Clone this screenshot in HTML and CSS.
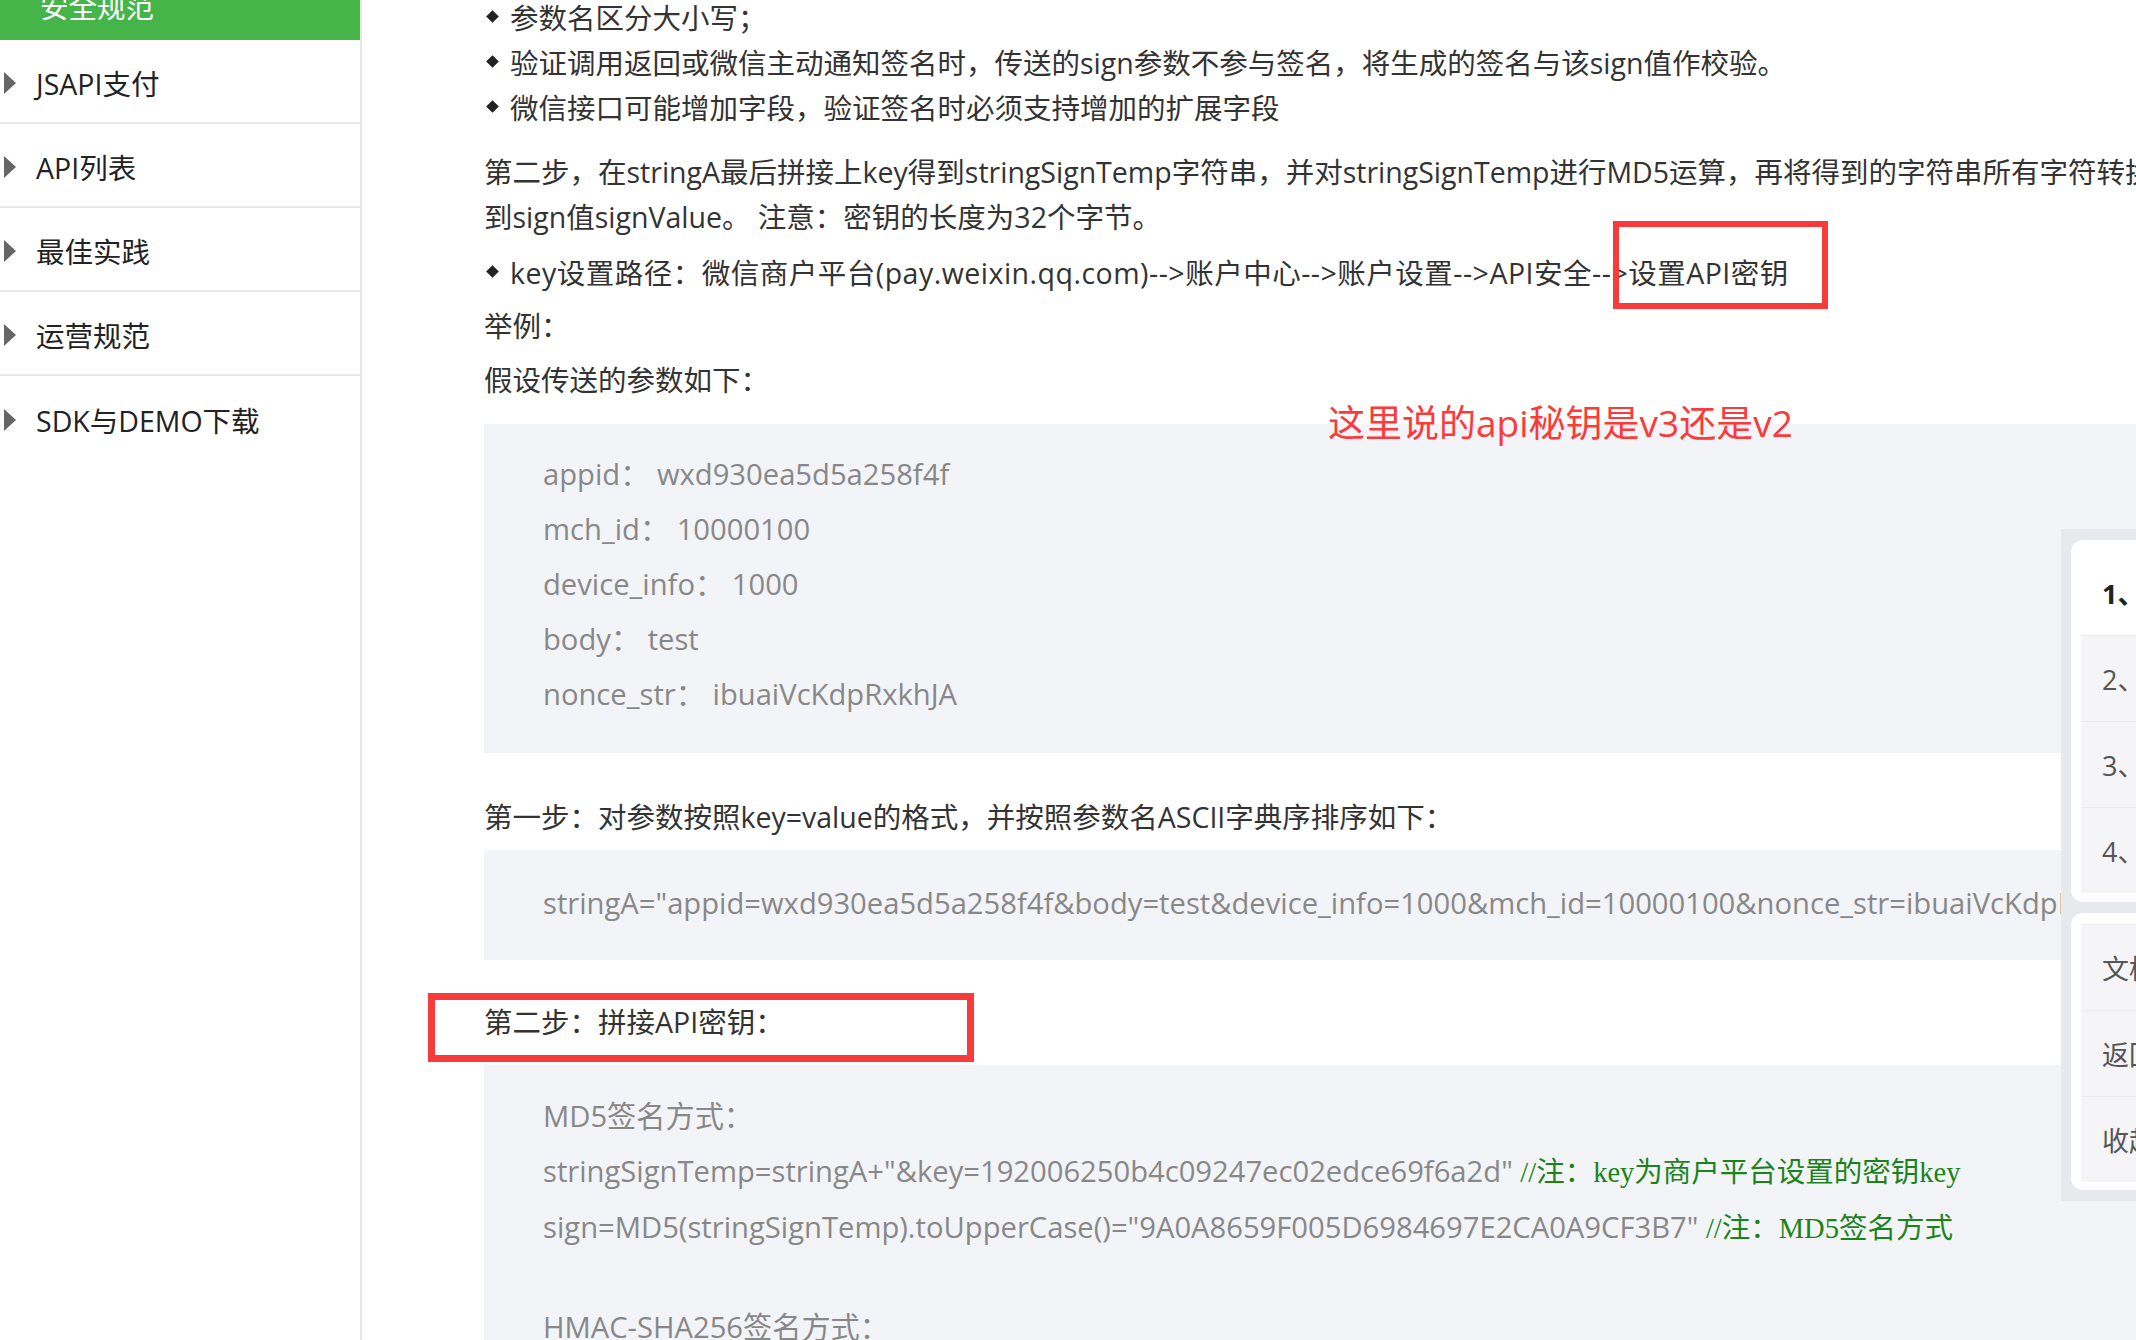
FILE: index.html
```html
<!DOCTYPE html>
<html lang="zh-CN">
<head>
<meta charset="utf-8">
<title>安全规范</title>
<link rel="stylesheet" href="styles.css">
</head>
<body>
<div class="page">
    <aside class="sidebar">
        <div class="nav-current">安全规范</div>
        <div class="nav-item">JSAPI支付</div>
        <div class="nav-item">API列表</div>
        <div class="nav-item">最佳实践</div>
        <div class="nav-item">运营规范</div>
        <div class="nav-item">SDK与DEMO下载</div>
    </aside>

    <main class="doc">
        <ul class="dots first">
            <li>参数名区分大小写；</li>
            <li>验证调用返回或微信主动通知签名时，传送的sign参数不参与签名，将生成的签名与该sign值作校验。</li>
            <li>微信接口可能增加字段，验证签名时必须支持增加的扩展字段</li>
        </ul>
        <p class="para-step">第二步，在stringA最后拼接上key得到stringSignTemp字符串，并对stringSignTemp进行MD5运算，再将得到的字符串所有字符转换为大写，得<br>到sign值signValue。 注意：密钥的长度为32个字节。</p>
        <ul class="dots key-path">
            <li>key设置路径：微信商户平台(pay.weixin.qq.com)--&gt;账户中心--&gt;账户设置--&gt;API安全--&gt;<span class="marked">设置API密钥</span></li>
        </ul>
        <p class="para-example">举例：</p>
        <p class="para-assume">假设传送的参数如下：</p>

        <div class="code code-params">
            <span class="note">这里说的api秘钥是v3还是v2</span>
            <div>appid：&nbsp;wxd930ea5d5a258f4f</div>
            <div>mch_id：&nbsp;10000100</div>
            <div>device_info：&nbsp;1000</div>
            <div>body：&nbsp;test</div>
            <div>nonce_str：&nbsp;ibuaiVcKdpRxkhJA</div>
        </div>

        <p class="para-first">第一步：对参数按照key=value的格式，并按照参数名ASCII字典序排序如下：</p>
        <div class="code code-string">
            <div>stringA="appid=wxd930ea5d5a258f4f&amp;body=test&amp;device_info=1000&amp;mch_id=10000100&amp;nonce_str=ibuaiVcKdpRxkhJA"</div>
        </div>

        <p class="para-second">第二步：拼接API密钥：</p>
        <div class="code code-sign">
            <div>MD5签名方式：</div>
            <div>stringSignTemp=stringA+"&amp;key=192006250b4c09247ec02edce69f6a2d" <span class="comment">//注：key为商户平台设置的密钥key</span></div>
            <div>sign=MD5(stringSignTemp).toUpperCase()="9A0A8659F005D6984697E2CA0A9CF3B7" <span class="comment">//注：MD5签名方式</span></div>
            <div class="code-gap">HMAC-SHA256签名方式：</div>
        </div>
    </main>
</div>

<div class="float-nav">
    <div class="float-card">
        <div class="float-item active">1、</div>
        <div class="float-item">2、</div>
        <div class="float-item">3、</div>
        <div class="float-item">4、</div>
    </div>
    <div class="float-card tools">
        <div class="float-item">文档目录</div>
        <div class="float-item">返回顶部</div>
        <div class="float-item">收起</div>
    </div>
</div>
</body>
</html>
```

FILE: styles.css
```css
body {
    margin: 0;
    font-family: "Open Sans", "Noto Sans CJK SC", sans-serif;
    background-color: #ffffff;
    color: #333333;
    overflow: hidden;
}

.page {
    display: flex;
    height: 1340px;
    overflow: hidden;
}

/* 左侧导航 */
.sidebar {
    width: 360px;
    flex-shrink: 0;
    border-right: 2px solid #e6e6ea;
    font-size: 28.5px;
    color: #222222;
}

.nav-current {
    height: 70px;
    margin-top: -30px;
    padding-left: 40px;
    display: flex;
    align-items: center;
    background-color: #45b449;
    color: #ffffff;
}

.nav-item {
    height: 84px;
    box-sizing: border-box;
    padding: 3px 0 0 4px;
    display: flex;
    align-items: center;
    gap: 20px;
    border-bottom: 2px solid #e8e8ec;
}

.nav-item:last-child {
    border-bottom: none;
}

.nav-item::before {
    content: "";
    border-left: 12px solid #666666;
    border-top: 11.5px solid transparent;
    border-bottom: 11.5px solid transparent;
}

/* 正文 */
.doc {
    width: 1700px;
    flex-shrink: 0;
    padding-left: 122px;
    font-size: 28.5px;
    line-height: 45px;
    white-space: nowrap;
    position: relative;
}

.doc p, .doc ul {
    margin: 0;
}

.dots {
    list-style: none;
    padding: 0;
}

.dots li {
    position: relative;
    padding-left: 26px;
}

.dots li::before {
    content: "";
    position: absolute;
    left: 4px;
    top: 16px;
    width: 9px;
    height: 9px;
    background-color: #222222;
    transform: rotate(45deg);
}

.dots.first { margin-top: -4px; }
.para-step { margin-top: 19px !important; }
.key-path { margin-top: 11px !important; letter-spacing: 0.5px; }
.para-example { margin-top: 8px !important; }
.para-assume { margin-top: 9px !important; }

.marked {
    display: inline-block;
    position: relative;
}

.marked::after {
    content: "";
    position: absolute;
    left: -15px;
    right: -39px;
    top: -30px;
    bottom: -13px;
    border: 6px solid #f73b3b;
}

.code {
    background-color: #f3f4f8;
    color: #888888;
    font-size: 29.2px;
    line-height: 55px;
    padding-left: 59px;
    position: relative;
}

.code-params {
    margin-top: 21px;
    padding-top: 22.5px;
    padding-bottom: 31.5px;
}

.note {
    position: absolute;
    left: 844px;
    top: -21px;
    font-size: 37px;
    line-height: 40px;
    color: #fb3a3a;
}

.para-first { margin-top: 42px !important; }

.code-string {
    margin-top: 9.5px;
    padding-top: 26.5px;
    padding-bottom: 28.5px;
}

.para-second {
    margin-top: 40.5px !important;
    position: relative;
}

.para-second::after {
    content: "";
    position: absolute;
    left: -56px;
    width: 532px;
    top: -7px;
    bottom: -17px;
    border: 7px solid #f73b3b;
}

.code-sign {
    margin-top: 19.5px;
    padding-top: 24.5px;
    padding-bottom: 20px;
}

.code-gap {
    margin-top: 44px;
}

.comment {
    font-family: "Liberation Serif", "Noto Sans CJK SC", serif;
    font-size: 28.5px;
    color: #1a841a;
}

/* 右侧浮动目录 */
.float-nav {
    position: fixed;
    top: 529px;
    left: 2061px;
    width: 300px;
    padding: 11px 10px;
    background-color: #e8e9ed;
    font-size: 27px;
    color: #555555;
}

.float-card {
    background-color: #ffffff;
    border-radius: 12px;
    padding: 9px 10px;
}

.float-card.tools {
    margin-top: 11px;
    padding: 11px 10px 8px;
}

.float-item {
    height: 86px;
    box-sizing: border-box;
    padding-left: 21px;
    display: flex;
    align-items: center;
    background-color: #f5f5f7;
    border-top: 1px solid #ececf0;
}

.float-item.active {
    background-color: #ffffff;
    border-top: none;
    font-weight: bold;
    color: #222222;
}
```
